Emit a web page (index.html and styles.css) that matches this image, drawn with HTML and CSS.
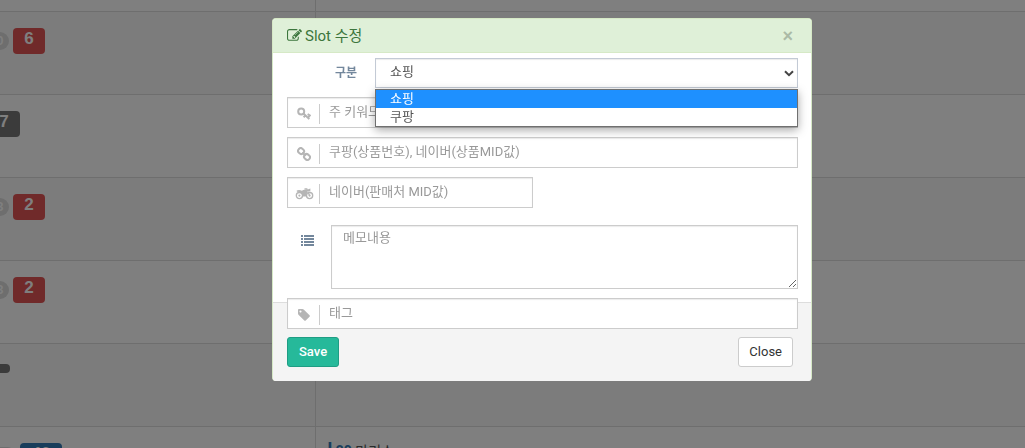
FILE: index.html
```html
<!DOCTYPE html>
<html lang="ko">
<head>
<meta charset="utf-8">
<title>Slot 수정</title>
<link rel="stylesheet" href="styles.css">
</head>
<body>
<table class="slots">
  <tbody>
    <tr class="first"><td class="rank"></td><td></td></tr>
    <tr><td class="rank"><span class="pill">0</span><span class="badge red">6</span></td><td></td></tr>
    <tr><td class="rank"><span class="badge dark">7</span></td><td></td></tr>
    <tr><td class="rank"><span class="pill">3</span><span class="badge red">2</span></td><td></td></tr>
    <tr><td class="rank"><span class="pill">3</span><span class="badge red">2</span></td><td></td></tr>
    <tr><td class="rank"><span class="bar"></span></td><td></td></tr>
    <tr><td class="rank"><span class="pill wide">0</span><span class="badge blue">40</span></td><td class="name"><b>l</b> <span>20</span> 만리스</td></tr>
  </tbody>
</table>

<div class="backdrop">
  <form class="modal" role="dialog" aria-labelledby="title">
    <header class="modal-header">
      <svg class="edit" viewBox="0 0 1792 1792" aria-hidden="true"><path d="M888 1184l116-116-152-152-116 116v56h96v96h56zm440-720q-16-16-33 1l-350 350q-17 17-1 33t33-1l350-350q17-17 1-33zm80 594v190q0 119-84.5 203.5t-203.5 84.5h-832q-119 0-203.5-84.5t-84.5-203.5v-832q0-119 84.5-203.5t203.5-84.5h832q63 0 117 25 15 7 18 23 3 17-9 29l-49 49q-14 14-32 8-23-6-45-6h-832q-66 0-113 47t-47 113v832q0 66 47 113t113 47h832q66 0 113-47t47-113v-126q0-13 9-22l64-64q15-15 35-7t20 29zm-96-738l288 288-672 672h-288v-288zm444 132l-92 92-288-288 92-92q28-28 68-28t68 28l152 152q28 28 28 68t-28 68z"/></svg>
      <h1 class="title" id="title">Slot 수정</h1>
      <button class="dismiss" type="button" aria-label="닫기">×</button>
    </header>

    <div class="modal-body">
      <div class="row type-row">
        <label class="type-label" for="type">구분</label>
        <div class="picker">
          <select class="control" id="type">
            <option selected>쇼핑</option>
            <option>쿠팡</option>
          </select>
          <svg class="chevron" viewBox="0 0 10 7" aria-hidden="true"><path d="M1 1.2l4 4 4-4"/></svg>
          <ul class="menu" role="listbox">
            <li class="option active" role="option" aria-selected="true">쇼핑</li>
            <li class="option" role="option" aria-selected="false">쿠팡</li>
          </ul>
        </div>
      </div>

      <label class="field">
        <span class="addon"><svg class="icon" viewBox="0 0 14 14" aria-hidden="true"><circle class="line" cx="4.2" cy="4.4" r="3"/><path class="line" d="M6.5 6.5l5.8 5.6M8.2 8.6l-1.6 1.7M10.6 7.1l2.2 1.3-1.5 2.1"/></svg></span>
        <input class="control" type="text" placeholder="주 키워드" aria-label="주 키워드">
      </label>

      <label class="field">
        <span class="addon"><svg class="icon" viewBox="0 0 14 14" aria-hidden="true"><rect class="line" x="1.1" y="1.4" width="6" height="5.2" rx="2.4" transform="rotate(40 4 4)"/><rect class="line" x="7" y="7.4" width="6" height="5.2" rx="2.4" transform="rotate(40 10 10)"/><path class="line" d="M5.2 5.4l3.6 3.3"/></svg></span>
        <input class="control" type="text" placeholder="쿠팡(상품번호), 네이버(상품MID값)" aria-label="상품번호">
      </label>

      <label class="field short">
        <span class="addon"><svg class="icon moto" viewBox="0 0 18 12" aria-hidden="true"><circle class="ring" cx="3.9" cy="7.6" r="3.1"/><circle class="ring" cx="14.1" cy="7.6" r="3.1"/><circle cx="3.9" cy="7.6" r="1.1"/><circle cx="14.1" cy="7.6" r="1.1"/><path d="M1.2 2.4q3-.8 5.2.4 2-1.8 4.6-.8l1 1.2-1.4 5.4H7.2L5.8 5.2Q4 3.8 1.4 3.8z"/><path class="ring" d="M9 1h2.3L14 7.4M11.8 2.4l2.4-1v1.4z"/></svg></span>
        <input class="control" type="text" placeholder="네이버(판매처 MID값)" aria-label="판매처 MID값">
      </label>

      <div class="row memo-row">
        <label class="memo-label" for="memo" aria-label="메모"><svg class="list" viewBox="0 0 13 11" aria-hidden="true"><path d="M0 0h2v2H0zM3 0h10v2H3zM0 3h2v2H0zM3 3h10v2H3zM0 6h2v2H0zM3 6h10v2H3zM0 9h2v2H0zM3 9h10v2H3z"/></svg></label>
        <textarea class="control memo" id="memo" placeholder="메모내용"></textarea>
      </div>

      <label class="field">
        <span class="addon"><svg class="icon" viewBox="0 0 1792 1792" aria-hidden="true"><path d="M576 448q0-53-37.5-90.5t-90.5-37.5-90.5 37.5-37.5 90.5 37.5 90.5 90.5 37.5 90.5-37.5 37.5-90.5zm1067 576q0 53-37 90l-491 492q-39 37-91 37-53 0-90-37l-715-716q-38-37-64.5-101t-26.5-117v-416q0-52 38-90t90-38h416q53 0 117 26.5t102 64.5l715 714q37 39 37 91z"/></svg></span>
        <input class="control" type="text" placeholder="태그" aria-label="태그">
      </label>
    </div>

    <footer class="modal-footer">
      <button class="btn save" type="submit">Save</button>
      <button class="btn" type="button">Close</button>
    </footer>
  </form>
</div>
</body>
</html>
```
FILE: styles.css
```css
* { box-sizing: border-box; }

body {
  margin: 0;
  height: 100vh;
  overflow: hidden;
  background: #fff;
  color: #555;
  font: 13px/18px Roboto, "Noto Sans CJK KR", sans-serif;
}

/* Page behind the dialog */
.slots {
  width: 100%;
  border-collapse: collapse;
  table-layout: fixed;
}
.slots tr { height: 83px; }
.slots .first { height: 11px; }
.slots tr:nth-child(even) { background: #f9f9f9; }
.slots td {
  padding: 0;
  vertical-align: top;
  border-bottom: 1px solid #ddd;
}
.slots .rank {
  width: 315px;
  border-right: 1px solid #ddd;
  white-space: nowrap;
}
.badge, .pill, .bar {
  display: inline-block;
  vertical-align: middle;
}
.badge {
  min-width: 32px;
  height: 26px;
  margin-top: 16px;
  padding: 0 10px;
  border-radius: 4px;
  color: #fff;
  font: bold 17px/22px "Liberation Sans", Arial, sans-serif;
  text-align: center;
}
.red { background: #e05454; }
.blue { background: #337ab7; min-width: 42px; }
.dark { background: #777; margin-left: -12px; }
.pill {
  width: 18px;
  height: 18px;
  margin: 16px 4px 0 -9px;
  border-radius: 9px;
  background: #dcdcdc;
  color: #fff;
  font: bold 12px/18px "Liberation Sans", Arial, sans-serif;
  text-align: center;
}
.pill.wide { width: 25px; }
.bar {
  width: 20px;
  height: 9px;
  margin: 20px 0 0 -10px;
  border-radius: 4px;
  background: #777;
}
.slots .name { padding: 14px 12px; font-size: 14px; }
.name b { color: #337ab7; font-size: 18px; }
.name span { color: #337ab7; font-weight: bold; }

/* Dialog */
.backdrop {
  position: fixed;
  inset: 0;
  padding: 18px 0 0 59px;
  background: rgba(0, 0, 0, .5);
}
.modal {
  max-width: 540px;
  margin: 0 auto;
  border: 1px solid #d6e9c6;
  border-bottom: 0;
  border-radius: 4px;
  background: #fff;
}
.modal-header {
  display: flex;
  align-items: center;
  height: 34px;
  padding: 0 18px 0 14px;
  border-bottom: 1px solid #d6e9c6;
  border-radius: 3px 3px 0 0;
  background: #dff0d8;
  color: #3c763d;
}
.edit { width: 15px; height: 15px; margin-right: 3px; fill: currentColor; }
.title { flex: 1; margin: 0; font-size: 15px; font-weight: 400; }
.dismiss {
  padding: 0;
  border: 0;
  background: none;
  color: #abbaa6;
  font: bold 18px/20px "Liberation Sans", Arial, sans-serif;
}
.modal-body {
  position: relative;
  z-index: 1;
  display: flex;
  flex-direction: column;
  gap: 9px;
  padding: 5px 13px 0 14px;
}
.row { display: flex; }
.type-label {
  width: 88px;
  padding-right: 18px;
  color: #73879c;
  font-size: 12px;
  font-weight: 700;
  line-height: 30px;
  text-align: right;
}
.picker { position: relative; flex: 1; }
.control {
  display: block;
  width: 100%;
  height: 31px;
  margin: 0;
  border: 1px solid #ccc;
  border-radius: 0;
  outline: 0;
  background: #fff;
  box-shadow: inset 0 1px 1px rgba(0, 0, 0, .08);
  color: #555;
  font: inherit;
}
.control::placeholder { color: #999; opacity: 1; }
select.control {
  height: 30px;
  padding: 0 14px 2px;
  border-color: #c3cad5;
  appearance: none;
}
.chevron {
  position: absolute;
  top: 12px;
  right: 4px;
  width: 10px;
  height: 7px;
  fill: none;
  stroke: #444;
  stroke-width: 2;
}
.menu {
  position: absolute;
  z-index: 2;
  top: 31px;
  left: 0;
  right: 0;
  margin: 0;
  padding: 0;
  border: 1px solid #707070;
  background: #fff;
  box-shadow: 0 3px 9px rgba(0, 0, 0, .35);
  list-style: none;
}
.option { padding: 0 14px; line-height: 18px; }
.active { background: #1e90ff; color: #fff; }
.field { position: relative; display: block; }
.short { width: 246px; }
.addon {
  position: absolute;
  top: 7px;
  left: 1px;
  display: flex;
  align-items: center;
  justify-content: center;
  width: 32px;
  height: 20px;
  padding-left: 1px;
  border-right: 1px solid #ccc;
}
.icon { width: 14px; height: 14px; fill: #b5b5b5; }
.moto { width: 19px; height: 12px; }
.line, .ring { fill: none; stroke: #b5b5b5; stroke-width: 2; }
.ring { stroke-width: 1.3; }
.field .control { padding: 0 10px 2px 41px; }
.memo-row { padding-top: 8px; }
.memo-label { width: 44px; padding: 10px 0 0 14px; }
.list { display: block; width: 13px; height: 11px; fill: #73879c; }
.memo {
  flex: 1;
  height: 64px;
  padding: 3px 11px;
  resize: vertical;
}
.modal-footer {
  display: flex;
  justify-content: space-between;
  margin-top: -27px;
  padding: 34px 18px 14px 14px;
  border-top: 1px solid #ddd;
  border-radius: 0 0 3px 3px;
  background: #f4f4f4;
}
.btn {
  height: 30px;
  padding: 0 10px;
  border: 1px solid #ccc;
  border-radius: 3px;
  background: #fff;
  color: #333;
  font: inherit;
}
.save {
  padding: 0 11px;
  border-color: #1f9d84;
  background: #26b99a;
  color: #fff;
  font-weight: 500;
}
```
